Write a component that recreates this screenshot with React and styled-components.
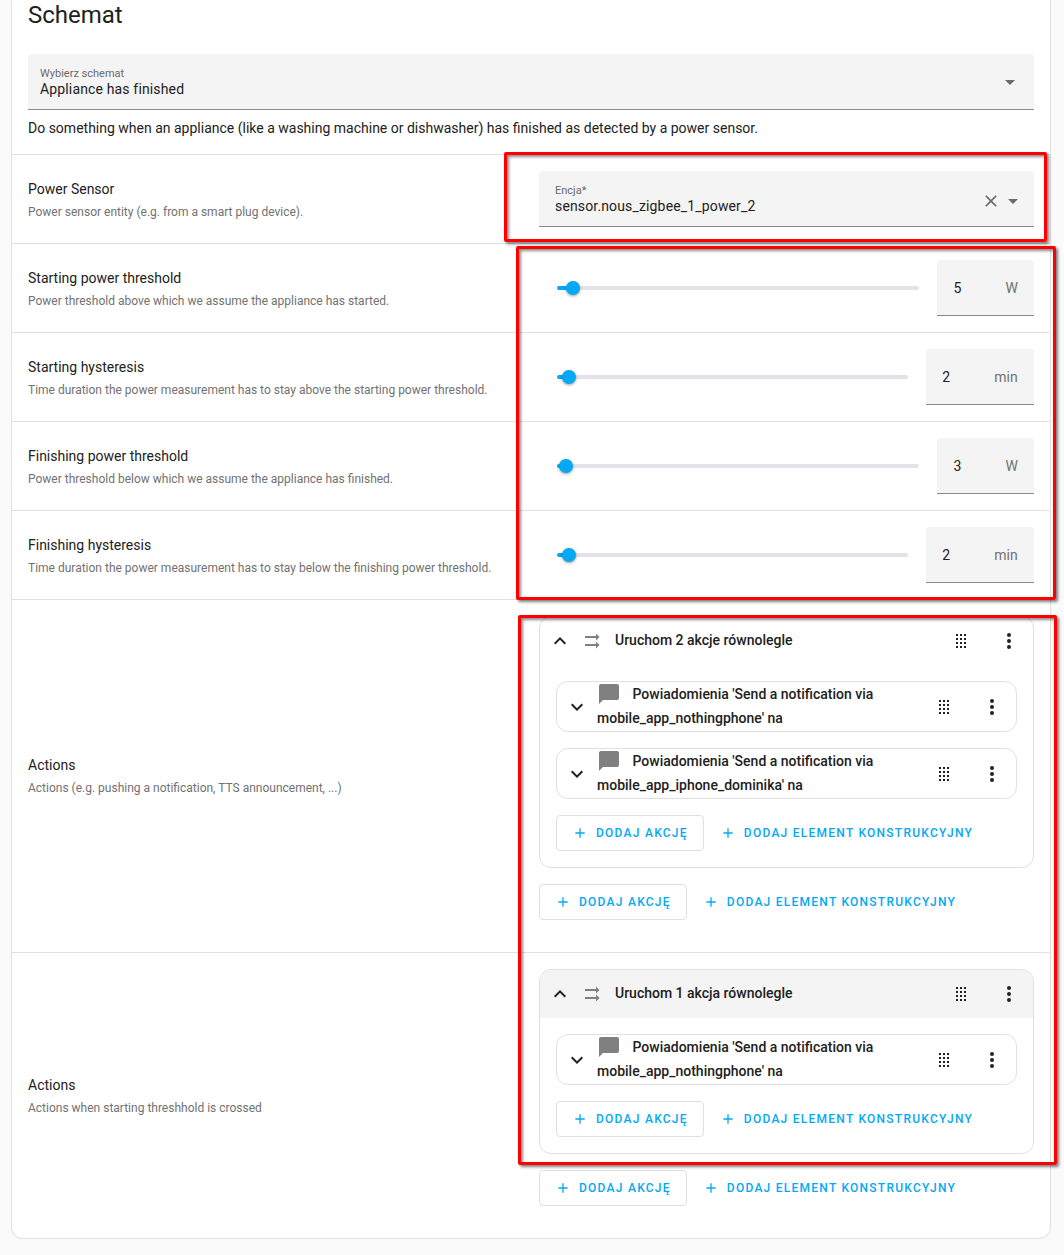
import React, { useState, useId } from "react";
import styled, { createGlobalStyle, css } from "styled-components";

const GlobalStyle = createGlobalStyle`
  *, *::before, *::after { box-sizing: border-box; }
  body {
    margin: 0;
    background: #fafafa;
    color: #212121;
    font-family: Roboto, "Noto Sans", sans-serif;
    font-size: 14px;
    line-height: 20px;
    -webkit-font-smoothing: antialiased;
  }
`;

const Page = styled.main`
  padding: 0 13px 17px 11px;
`;

const Card = styled.section`
  background: #fff;
  border: 1px solid #e0e0e0;
  border-top: 0;
  border-radius: 0 0 12px 12px;
`;

const Intro = styled.header`
  padding: 0 16px 16px;
`;

const Title = styled.h1`
  margin: 0 0 24px;
  font-size: 24px;
  font-weight: 400;
  line-height: 30px;
`;

const Description = styled.p`
  margin: 8px 0 0;
`;

const Field = styled.div`
  display: flex;
  align-items: center;
  height: 56px;
  padding: ${(p) => (p.$wide ? "0 9px 0 16px" : "0 12px")};
  background: #f4f4f4;
  border-bottom: 1px solid #8a8a8a;
  border-radius: 4px 4px 0 0;
`;

const FieldBody = styled.div`
  display: flex;
  flex: 1;
  flex-direction: column;
  min-width: 0;
`;

const FieldLabel = styled.label`
  color: #6b6b6b;
  font-size: 11px;
  line-height: 14px;
`;

const FieldActions = styled.div`
  display: flex;
  align-items: center;
  padding-top: 4px;
`;

const fieldText = css`
  width: 100%;
  padding: 0;
  border: 0;
  outline: 0;
  background: none;
  color: #212121;
  font: inherit;
  letter-spacing: 0.15px;
  line-height: 16px;
  height: 16px;
`;

const Select = styled.select`
  ${fieldText}
  appearance: none;
`;

const TextInput = styled.input`
  ${fieldText}
`;

const ClearButton = styled.button`
  display: flex;
  padding: 0;
  border: 0;
  background: none;
  color: #6b6b6b;
`;

const Annotated = styled.div`
  position: relative;
`;

const Highlight = styled.div`
  position: absolute;
  inset: ${(p) => p.$inset};
  z-index: 1;
  border: 3px solid #fe0000;
  border-radius: 2px;
  box-shadow: 2px 2px 3px rgba(0, 0, 0, 0.5), inset 2px 2px 3px rgba(0, 0, 0, 0.45);
  pointer-events: none;
`;

const Row = styled.div`
  display: grid;
  grid-template-columns: minmax(0, 1fr) minmax(0, 1fr);
  column-gap: 16px;
  align-items: center;
  padding: 16px;
  padding-bottom: ${(p) => (p.$tall ? "32px" : "16px")};
  border-top: 1px solid #e0e0e0;
`;

const RowText = styled.div`
  display: flex;
  flex-direction: column;
  gap: 4px;
  margin-right: -8px;
  padding-top: ${(p) => (p.$tall ? "16px" : "2px")};
`;

const RowName = styled.div`
  font-size: 14px;
  line-height: 20px;
`;

const RowHint = styled.div`
  color: #727272;
  font-size: 12px;
  line-height: 18px;
`;

const SliderControl = styled.div`
  display: flex;
  align-items: center;
  gap: 11px;
  padding-left: 11px;
`;

const SliderTrack = styled.div`
  position: relative;
  display: flex;
  flex: 1;
  &::before {
    content: "";
    position: absolute;
    inset: 8px 7px;
    border-radius: 2px;
    background: linear-gradient(to right, #03a9f4 ${(p) => p.$fill}%, #e4e1e9 ${(p) => p.$fill}%);
  }
`;

const Range = styled.input`
  position: relative;
  width: 100%;
  height: 20px;
  margin: 0;
  appearance: none;
  background: none;
  &::-webkit-slider-thumb {
    appearance: none;
    width: 14px;
    height: 14px;
    border-radius: 50%;
    background: #03a9f4;
    box-shadow: 0 1px 3px rgba(0, 0, 0, 0.4);
  }
`;

const NumberField = styled(Field)`
  gap: 12px;
  padding: 0 16px;
`;

const NumberInput = styled.input`
  ${fieldText}
  width: 40px;
  appearance: textfield;
  &::-webkit-inner-spin-button { appearance: none; }
`;

const Unit = styled.span`
  color: #727272;
  letter-spacing: 0.15px;
`;

const Panel = styled.div`
  border: 1px solid #e0e0e0;
  border-radius: 12px;
  overflow: hidden;
`;

const PanelHeader = styled.div`
  display: flex;
  align-items: center;
  min-height: ${(p) => (p.$nested ? "49px" : "48px")};
  padding-left: 8px;
  background: ${(p) => (p.$active ? "#f4f4f4" : "transparent")};
`;

const PanelTitle = styled.h3`
  flex: 1;
  margin: 0 0 0 ${(p) => (p.$nested ? "0" : "11px")};
  padding-bottom: ${(p) => (p.$nested ? "1px" : "2px")};
  font-size: 14px;
  font-weight: 500;
  line-height: 24px;
`;

const PanelBody = styled.div`
  display: flex;
  flex-direction: column;
  gap: 16px;
  padding: 16px;
`;

const IconButton = styled.button`
  display: flex;
  justify-content: center;
  width: ${(p) => (p.$compact ? "24px" : "48px")};
  margin-right: ${(p) => (p.$compact ? "8px" : "0")};
  padding: 0;
  border: 0;
  background: none;
  color: #212121;
`;

const ActionList = styled.div`
  display: flex;
  flex-direction: column;
  gap: 16px;
`;

const ButtonBar = styled.div`
  display: flex;
`;

const Button = styled.button`
  display: flex;
  align-items: center;
  gap: 8px;
  height: 36px;
  padding: 0 15px;
  border: 1px solid ${(p) => (p.$outlined ? "#e0e0e0" : "transparent")};
  border-radius: 4px;
  background: none;
  color: #03a9f4;
  font: inherit;
  font-size: 12px;
  font-weight: 500;
  letter-spacing: 1.25px;
  text-transform: uppercase;
  white-space: nowrap;
`;

const Svg = styled.svg`
  flex: none;
  width: ${(p) => p.$size}px;
  height: ${(p) => p.$size}px;
  fill: ${(p) => p.$color};
`;

const InlineIcon = styled(Svg)`
  margin-right: 8px;
  vertical-align: bottom;
`;

const PATHS = {
  up: "M7.41,15.41L12,10.83L16.59,15.41L18,14L12,8L6,14L7.41,15.41Z",
  down: "M7.41,8.58L12,13.17L16.59,8.58L18,10L12,16L6,10L7.41,8.58Z",
  close: "M19,6.41L17.59,5L12,10.59L6.41,5L5,6.41L10.59,12L5,17.59L6.41,19L12,13.41L17.59,19L19,17.59L13.41,12L19,6.41Z",
  menuDown: "M7,10L12,15L17,10H7Z",
  plus: "M19,13H13V19H11V13H5V11H11V5H13V11H19V13Z",
  dots: "M12,16A2,2 0 0,1 14,18A2,2 0 0,1 12,20A2,2 0 0,1 10,18A2,2 0 0,1 12,16M12,10A2,2 0 0,1 14,12A2,2 0 0,1 12,14A2,2 0 0,1 10,12A2,2 0 0,1 12,10M12,4A2,2 0 0,1 14,6A2,2 0 0,1 12,8A2,2 0 0,1 10,6A2,2 0 0,1 12,4Z",
  parallel: "M16,4.5V7H5V9H16V11.5L19.5,8M16,12.5V15H5V17H16V19.5L19.5,16",
  message: "M20,2H4A2,2 0 0,0 2,4V22L6,18H20A2,2 0 0,0 22,16V4C22,2.89 21.1,2 20,2Z",
  drag: [5, 9, 13, 17]
    .map((y) => [7, 11, 15].map((x) => `M${x},${y}h2v2h-2Z`).join(""))
    .join(""),
};

const Icon = ({ name, size = 24, color = "currentColor" }) => (
  <Svg viewBox="0 0 24 24" aria-hidden="true" $size={size} $color={color}>
    <path d={PATHS[name]} />
  </Svg>
);

function NumberRow({ name, hint, initial, min, max, step, unit }) {
  const [value, setValue] = useState(initial);
  const id = useId();
  const onChange = (e) => setValue(Number(e.target.value));
  return (
    <Row>
      <RowText>
        <RowName as="label" htmlFor={id}>{name}</RowName>
        <RowHint>{hint}</RowHint>
      </RowText>
      <SliderControl>
        <SliderTrack $fill={((value - min) / (max - min)) * 100}>
          <Range type="range" aria-label={name} min={min} max={max} step={step} value={value} onChange={onChange} />
        </SliderTrack>
        <NumberField>
          <NumberInput id={id} type="number" value={value} onChange={onChange} />
          <Unit>{unit}</Unit>
        </NumberField>
      </SliderControl>
    </Row>
  );
}

const AddButtons = () => (
  <ButtonBar>
    <Button type="button" $outlined>
      <Icon name="plus" size={16} />
      Dodaj akcję
    </Button>
    <Button type="button">
      <Icon name="plus" size={16} />
      Dodaj element konstrukcyjny
    </Button>
  </ButtonBar>
);

const HeaderTools = () => (
  <>
    <IconButton type="button" aria-label="Przenieś"><Icon name="drag" /></IconButton>
    <IconButton type="button" aria-label="Menu"><Icon name="dots" /></IconButton>
  </>
);

const Notification = ({ target }) => (
  <Panel>
    <PanelHeader $nested>
      <IconButton type="button" $compact aria-label="Rozwiń"><Icon name="down" /></IconButton>
      <PanelTitle $nested>
        <InlineIcon viewBox="0 0 24 24" aria-hidden="true" $size={24} $color="#808080">
          <path d={PATHS.message} />
        </InlineIcon>{" "}
        Powiadomienia 'Send a notification via {target}' na
      </PanelTitle>
      <HeaderTools />
    </PanelHeader>
  </Panel>
);

const ActionsRow = ({ hint, title, targets, active }) => (
  <Row $tall>
    <RowText $tall>
      <RowName>Actions</RowName>
      <RowHint>{hint}</RowHint>
    </RowText>
    <ActionList>
      <Panel>
        <PanelHeader $active={active}>
          <IconButton type="button" $compact aria-label="Zwiń"><Icon name="up" /></IconButton>
          <Icon name="parallel" color="#808080" />
          <PanelTitle>{title}</PanelTitle>
          <HeaderTools />
        </PanelHeader>
        <PanelBody>
          {targets.map((t) => <Notification key={t} target={t} />)}
          <AddButtons />
        </PanelBody>
      </Panel>
      <AddButtons />
    </ActionList>
  </Row>
);

export default function App() {
  return (
    <>
      <GlobalStyle />
      <Page>
        <Card>
          <Intro>
            <Title>Schemat</Title>
            <Field>
              <FieldBody>
                <FieldLabel htmlFor="blueprint">Wybierz schemat</FieldLabel>
                <Select id="blueprint">
                  <option>Appliance has finished</option>
                </Select>
              </FieldBody>
              <Icon name="menuDown" color="#6b6b6b" />
            </Field>
            <Description>
              Do something when an appliance (like a washing machine or dishwasher) has finished as detected by a power sensor.
            </Description>
          </Intro>
          <Annotated>
            <Row>
              <RowText>
                <RowName>Power Sensor</RowName>
                <RowHint>Power sensor entity (e.g. from a smart plug device).</RowHint>
              </RowText>
              <Field $wide>
                <FieldBody>
                  <FieldLabel htmlFor="entity">Encja*</FieldLabel>
                  <TextInput id="entity" defaultValue="sensor.nous_zigbee_1_power_2" />
                </FieldBody>
                <FieldActions>
                  <ClearButton type="button" aria-label="Wyczyść"><Icon name="close" size={20} /></ClearButton>
                  <Icon name="menuDown" color="#6b6b6b" />
                </FieldActions>
              </Field>
            </Row>
            <Highlight $inset="-2px 3px 1px calc(50% - 27px)" />
          </Annotated>
          <Annotated>
            <NumberRow name="Starting power threshold" hint="Power threshold above which we assume the appliance has started." initial={5} min={0.5} max={100} step={0.5} unit="W" />
            <NumberRow name="Starting hysteresis" hint="Time duration the power measurement has to stay above the starting power threshold." initial={2} min={0} max={60} step={1} unit="min" />
            <NumberRow name="Finishing power threshold" hint="Power threshold below which we assume the appliance has finished." initial={3} min={0.5} max={100} step={0.5} unit="W" />
            <NumberRow name="Finishing hysteresis" hint="Time duration the power measurement has to stay below the finishing power threshold." initial={2} min={0} max={60} step={1} unit="min" />
            <Highlight $inset="3px -6px -1px calc(50% - 15px)" />
          </Annotated>
          <Annotated>
            <ActionsRow
              hint="Actions (e.g. pushing a notification, TTS announcement, ...)"
              title="Uruchom 2 akcje równolegle"
              targets={["mobile_app_nothingphone", "mobile_app_iphone_dominika"]}
            />
            <ActionsRow
              hint="Actions when starting threshhold is crossed"
              title="Uruchom 1 akcja równolegle"
              targets={["mobile_app_nothingphone"]}
              active
            />
            <Highlight $inset="16px -7px 73px calc(50% - 13px)" />
          </Annotated>
        </Card>
      </Page>
    </>
  );
}
